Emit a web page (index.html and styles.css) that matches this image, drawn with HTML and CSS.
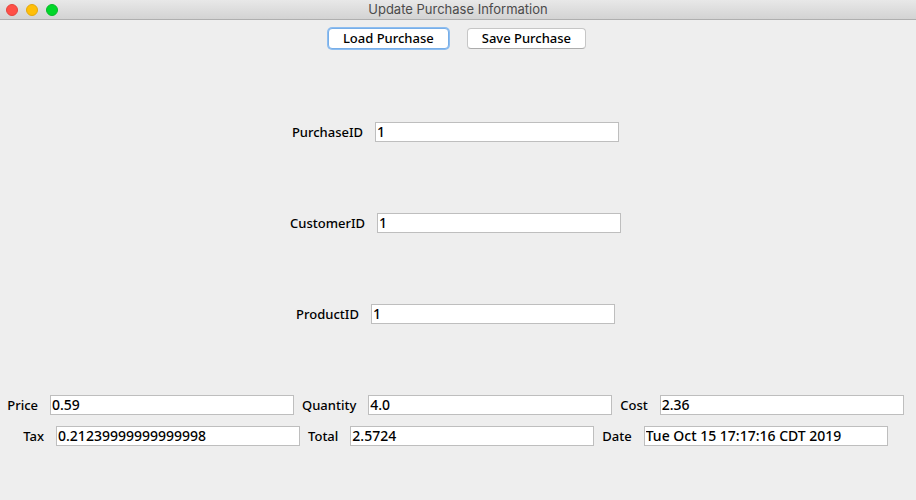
FILE: index.html
```html
<!DOCTYPE html>
<html lang="en">
<head>
<meta charset="utf-8">
<title>Update Purchase Information</title>
<link rel="stylesheet" href="styles.css">
</head>
<body>
<div class="window">
  <header class="titlebar">
    <div class="lights">
      <button class="light close" type="button" aria-label="Close"></button>
      <button class="light minimize" type="button" aria-label="Minimize"></button>
      <button class="light maximize" type="button" aria-label="Zoom"></button>
    </div>
    <h1 class="title">Update Purchase Information</h1>
  </header>
  <form class="content">
    <div class="actions">
      <button class="button primary" type="button">Load Purchase</button>
      <button class="button" type="button">Save Purchase</button>
    </div>
    <div class="row"><div class="field"><label for="purchase">PurchaseID</label><input id="purchase" type="text" value="1"></div></div>
    <div class="row"><div class="field"><label for="customer">CustomerID</label><input id="customer" type="text" value="1"></div></div>
    <div class="row"><div class="field"><label for="product">ProductID</label><input id="product" type="text" value="1"></div></div>
    <div class="details">
      <div class="row">
        <div class="field"><label for="price">Price</label><input id="price" type="text" value="0.59"></div>
        <div class="field"><label for="quantity">Quantity</label><input id="quantity" type="text" value="4.0"></div>
        <div class="field"><label for="cost">Cost</label><input id="cost" type="text" value="2.36"></div>
      </div>
      <div class="row">
        <div class="field"><label for="tax">Tax</label><input id="tax" type="text" value="0.21239999999999998"></div>
        <div class="field"><label for="total">Total</label><input id="total" type="text" value="2.5724"></div>
        <div class="field"><label for="date">Date</label><input id="date" type="text" value="Tue Oct 15 17:17:16 CDT 2019"></div>
      </div>
    </div>
  </form>
</div>
</body>
</html>
```
FILE: styles.css
```css
* {
  box-sizing: border-box;
}

body {
  margin: 0;
  background: #eee;
  color: #000;
  font: 500 13px/20px "Noto Sans", "Open Sans", sans-serif;
}

.window {
  display: flex;
  flex-direction: column;
  min-height: 100vh;
}

.titlebar {
  display: grid;
  grid-template-columns: 1fr auto 1fr;
  height: 20px;
  border-bottom: 1px solid #afafaf;
  background: linear-gradient(#e8e8e8, #d3d3d3);
}

.lights {
  display: flex;
  align-items: center;
  gap: 8px;
  padding-left: 6px;
}

.light {
  width: 12px;
  height: 12px;
  padding: 0;
  border: 1px solid;
  border-radius: 50%;
}

.close {
  background: #ff4f47;
  border-color: #e5443d;
}

.minimize {
  background: #ffbf08;
  border-color: #e3a90b;
}

.maximize {
  background: #00d729;
  border-color: #08b929;
}

.title {
  margin: 0;
  color: #4b4b4b;
  font: 400 13px/19px Inter, sans-serif;
}

.content {
  display: grid;
  flex: 1;
  grid-template-rows: 97fr 91fr 91fr 91fr 110fr;
}

.actions {
  display: flex;
  align-items: flex-start;
  justify-content: center;
  gap: 18px;
  padding: 8px 2px 0 0;
}

.button {
  height: 21px;
  padding: 0 14px;
  border: 1px solid #c6c6c6;
  border-bottom-color: #acacac;
  border-radius: 4px;
  background: #fff;
  color: #000;
  font: inherit;
  line-height: 19px;
}

.primary {
  border-color: #77aee8;
  box-shadow: 0 0 0 1px #8dbdf0;
}

.row {
  display: flex;
  flex-wrap: wrap;
  align-items: flex-start;
  justify-content: center;
  gap: 11px 8px;
  padding: 5px 5px 0 0;
}

.field {
  display: flex;
  gap: 12px;
}

.field input {
  width: 244px;
  height: 20px;
  padding: 0 2px 2px 1px;
  border: 1px solid #bebebe;
  border-radius: 0;
  background: #fff;
  color: #000;
  font: 500 14px/16px "Noto Sans", "Open Sans", sans-serif;
}

.details .row + .row {
  padding-top: 11px;
}
```
